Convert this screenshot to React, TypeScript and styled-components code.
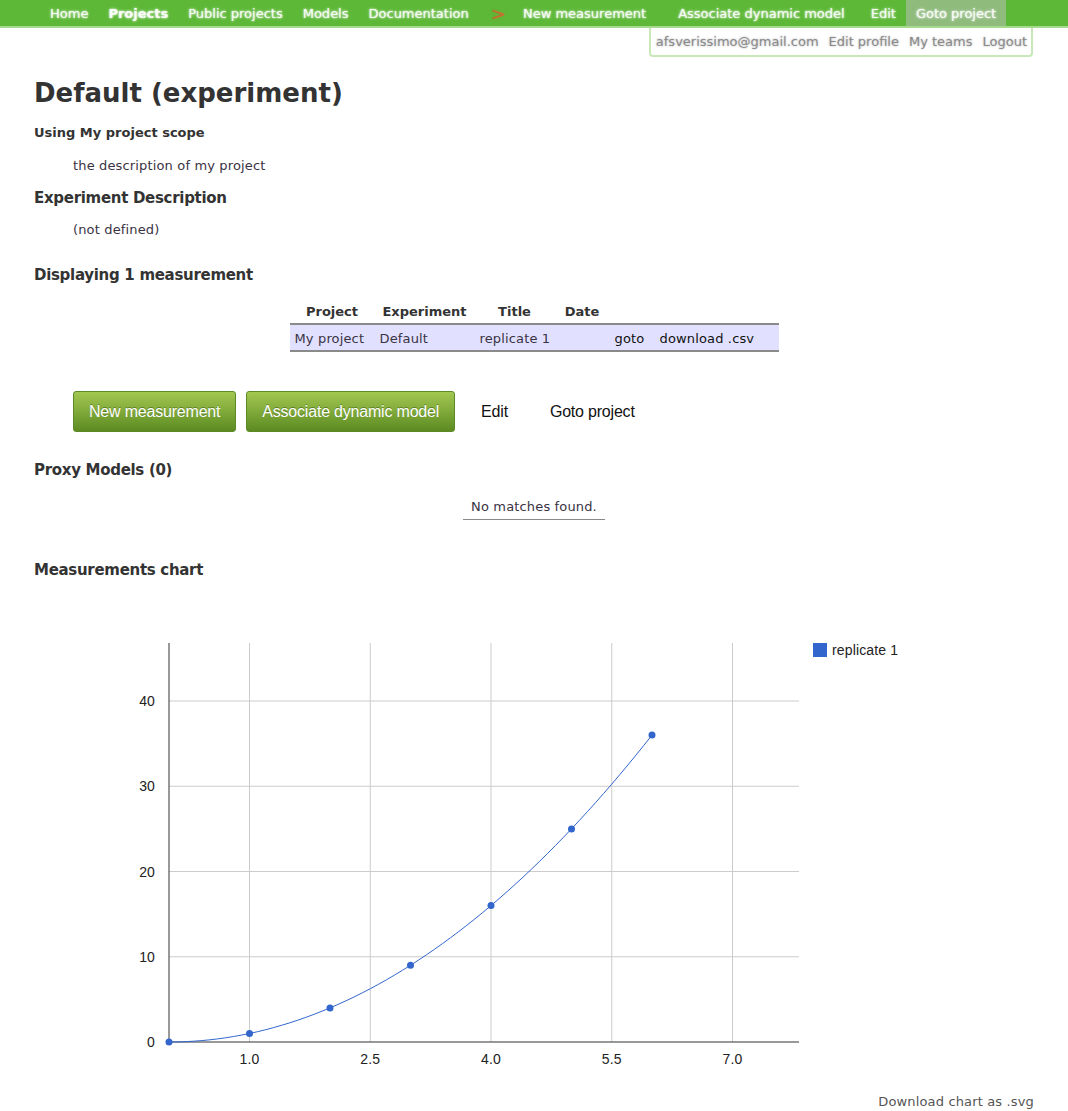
import React from 'react';
import styled, { createGlobalStyle } from 'styled-components';

const GlobalStyle = createGlobalStyle`
  body {
    margin: 0;
    background: #fff;
    font-family: "DejaVu Sans", Verdana, sans-serif;
    font-size: 13px;
    letter-spacing: 0.15px;
    color: #333;
  }
`;

const TopBar = styled.nav`
  display: flex;
  align-items: stretch;
  height: 26px;
  padding-left: 40px;
  background: #5cb836;
  border-bottom: 2px solid #a6da8e;
`;

const NavItem = styled.a<{ bold?: boolean; current?: boolean; wide?: boolean }>`
  display: flex;
  align-items: center;
  padding: 0 ${p => (p.wide ? 16 : 10)}px;
  background: ${p => (p.current ? '#8fbb7d' : 'transparent')};
  color: rgba(255, 255, 255, 0.72);
  font-weight: ${p => (p.bold ? 700 : 400)};
  letter-spacing: 0;
  text-shadow: 0 0 3px rgba(255, 255, 255, 0.9), 0 0 1px rgba(255, 255, 255, 0.8);
  text-decoration: none;
  white-space: nowrap;
`;

const NavSeparator = styled.span`
  display: flex;
  align-items: center;
  padding: 0 1px 0 12px;
  color: #c46e30;
  font-size: 18px;
  text-shadow: 0 0 2px rgba(200, 110, 50, 0.7);
`;

const UserRow = styled.div`
  display: flex;
  justify-content: flex-end;
  padding-right: 35px;
`;

const UserBox = styled.div`
  display: flex;
  align-items: center;
  gap: 10px;
  height: 27px;
  padding: 0 4px 0 5px;
  border: 2px solid #c9e8ba;
  border-top: none;
  border-radius: 0 0 4px 4px;
`;

const UserLink = styled.a`
  color: rgba(120, 120, 120, 0.8);
  letter-spacing: 0;
  text-shadow: 0 0 2px rgba(130, 130, 130, 0.7);
  text-decoration: none;
`;

const Main = styled.main`
  padding: 0 34px;
`;

const Title = styled.h1`
  margin: 21px 0 0;
  font-size: 26px;
  line-height: 31px;
  font-weight: 700;
  letter-spacing: 0;
  color: #333;
`;

const SubTitle = styled.h4`
  margin: 16px 0 0;
  font-size: 13px;
  line-height: 16px;
  font-weight: 700;
  letter-spacing: 0;
`;

const SectionTitle = styled.h3<{ gap?: number }>`
  margin: ${p => p.gap ?? 15}px 0 0;
  font-size: 15px;
  line-height: 18px;
  font-weight: 700;
  letter-spacing: -0.3px;
`;

const Indented = styled.p<{ gap?: number }>`
  margin: ${p => p.gap ?? 17}px 0 0;
  padding-left: 39px;
  line-height: 16px;
  color: #3a3344;
`;

const Table = styled.table`
  margin: 15px auto 0;
  border-collapse: collapse;
  table-layout: fixed;
  width: 489px;
`;

const Th = styled.th`
  padding: 4px 0;
  height: 16px;
  text-align: center;
  font-weight: 700;
  letter-spacing: 0;
  color: #333;
`;

const BodyRow = styled.tr`
  background: #e1e1ff;
  border-top: 2px solid #8a8a8a;
  border-bottom: 2px solid #8a8a8a;
`;

const Td = styled.td<{ dark?: boolean }>`
  padding: 6px 0 3px 5px;
  line-height: 16px;
  color: ${p => (p.dark ? '#111' : '#3a3344')};
  white-space: nowrap;
`;

const ButtonRow = styled.div`
  display: flex;
  gap: 10px;
  margin-top: 39px;
  padding-left: 39px;
`;

const Button = styled.a<{ plain?: boolean }>`
  display: flex;
  align-items: center;
  height: 39px;
  padding: 0 15px;
  border-radius: 3px;
  font-family: "Liberation Sans", Arial, sans-serif;
  font-size: 16px;
  letter-spacing: -0.2px;
  text-decoration: none;
  white-space: nowrap;
  color: ${p => (p.plain ? '#111' : '#fff')};
  border: 1px solid ${p => (p.plain ? 'transparent' : '#5b8a27')};
  background: ${p => (p.plain ? 'transparent' : 'linear-gradient(#a3c851, #5c8b22)')};
  text-shadow: ${p => (p.plain ? 'none' : '0 -1px 0 rgba(40, 70, 10, 0.45)')};
`;

const EmptyNote = styled.div`
  width: max-content;
  margin: 20px auto 0;
  padding: 0 8px 4px;
  line-height: 16px;
  border-bottom: 1px solid #888;
  color: #3a3344;
`;

const ChartWrap = styled.div`
  margin-top: 21px;
`;

const DownloadLink = styled.a`
  display: block;
  margin-top: 14px;
  text-align: right;
  line-height: 16px;
  color: #555;
  text-decoration: none;
`;

const W = 1000;
const H = 480;
const left = 135;
const right = 765;
const top = 43;
const bottom = 442;
const sx = (x: number) => left + 80.5 * x;
const sy = (y: number) => bottom - 8.525 * y;

const points = [0, 1, 2, 3, 4, 5, 6].map(x => [x, x * x]);

const curve = Array.from({ length: 61 }, (_, i) => {
  const x = i / 10;
  return `${i === 0 ? 'M' : 'L'}${sx(x).toFixed(2)},${sy(x * x).toFixed(2)}`;
}).join(' ');

const chartFont = '"Liberation Sans", Arial, sans-serif';

const Chart = () => (
  <svg width={W} height={H} viewBox={`0 0 ${W} ${H}`} style={{ display: 'block' }}>
    {[1, 2.5, 4, 5.5, 7].map(x => (
      <line key={x} x1={sx(x)} x2={sx(x)} y1={top} y2={bottom} stroke="#cccccc" strokeWidth={1} />
    ))}
    {[10, 20, 30, 40].map(y => (
      <line key={y} x1={left} x2={right} y1={sy(y)} y2={sy(y)} stroke="#cccccc" strokeWidth={1} />
    ))}
    <line x1={left} x2={left} y1={top} y2={bottom} stroke="#333" strokeWidth={1} />
    <line x1={left} x2={right} y1={bottom} y2={bottom} stroke="#333" strokeWidth={1} />
    {[0, 10, 20, 30, 40].map(y => (
      <text key={y} x={121} y={sy(y) + 5} textAnchor="end" fontFamily={chartFont} fontSize={14} fill="#222">
        {y}
      </text>
    ))}
    {[1, 2.5, 4, 5.5, 7].map(x => (
      <text key={x} x={sx(x)} y={464} textAnchor="middle" fontFamily={chartFont} fontSize={14} fill="#222">
        {x.toFixed(1)}
      </text>
    ))}
    <path d={curve} fill="none" stroke="#3366cc" strokeWidth={1} />
    {points.map(([x, y]) => (
      <circle key={x} cx={sx(x)} cy={sy(y)} r={3.5} fill="#3366cc" />
    ))}
    <rect x={779} y={43} width={14} height={14} fill="#3366cc" />
    <text x={798} y={55} fontFamily={chartFont} fontSize={14} fill="#222">
      replicate 1
    </text>
  </svg>
);

export default function App() {
  return (
    <>
      <GlobalStyle />
      <TopBar>
        <NavItem>Home</NavItem>
        <NavItem bold>Projects</NavItem>
        <NavItem>Public projects</NavItem>
        <NavItem>Models</NavItem>
        <NavItem>Documentation</NavItem>
        <NavSeparator>&gt;</NavSeparator>
        <NavItem wide>New measurement</NavItem>
        <NavItem wide>Associate dynamic model</NavItem>
        <NavItem>Edit</NavItem>
        <NavItem current>Goto project</NavItem>
      </TopBar>
      <UserRow>
        <UserBox>
          <UserLink>afsverissimo@gmail.com</UserLink>
          <UserLink>Edit profile</UserLink>
          <UserLink>My teams</UserLink>
          <UserLink>Logout</UserLink>
        </UserBox>
      </UserRow>
      <Main>
        <Title>Default (experiment)</Title>
        <SubTitle>Using My project scope</SubTitle>
        <Indented>the description of my project</Indented>
        <SectionTitle>Experiment Description</SectionTitle>
        <Indented gap={15}>(not defined)</Indented>
        <SectionTitle gap={28}>Displaying 1 measurement</SectionTitle>
        <Table>
          <colgroup>
            <col style={{ width: 85 }} />
            <col style={{ width: 100 }} />
            <col style={{ width: 80 }} />
            <col style={{ width: 55 }} />
            <col style={{ width: 45 }} />
            <col style={{ width: 124 }} />
          </colgroup>
          <thead>
            <tr>
              <Th>Project</Th>
              <Th>Experiment</Th>
              <Th>Title</Th>
              <Th>Date</Th>
              <Th />
              <Th />
            </tr>
          </thead>
          <tbody>
            <BodyRow>
              <Td>My project</Td>
              <Td>Default</Td>
              <Td>replicate 1</Td>
              <Td />
              <Td dark>goto</Td>
              <Td dark>download .csv</Td>
            </BodyRow>
          </tbody>
        </Table>
        <ButtonRow>
          <Button>New measurement</Button>
          <Button>Associate dynamic model</Button>
          <Button plain>Edit</Button>
          <Button plain>Goto project</Button>
        </ButtonRow>
        <SectionTitle gap={29}>Proxy Models (0)</SectionTitle>
        <EmptyNote>No matches found.</EmptyNote>
        <SectionTitle gap={41}>Measurements chart</SectionTitle>
        <ChartWrap>
          <Chart />
        </ChartWrap>
        <DownloadLink>Download chart as .svg</DownloadLink>
      </Main>
    </>
  );
}
